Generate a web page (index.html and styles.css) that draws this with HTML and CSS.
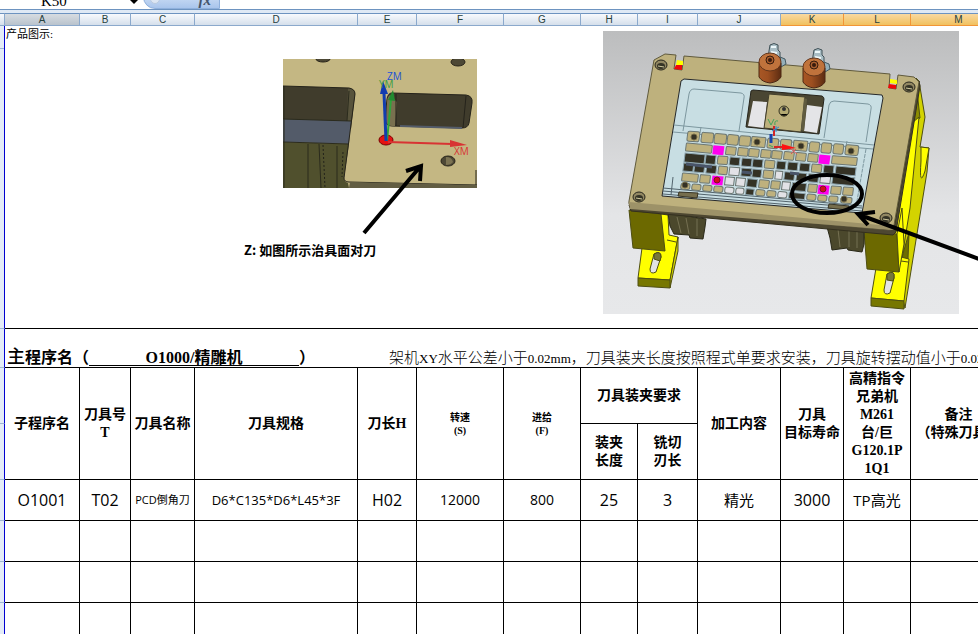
FILE: index.html
```html
<!DOCTYPE html>
<html lang="zh-CN">
<head>
<meta charset="utf-8">
<title>主程序名 O1000</title>
<link rel="stylesheet" href="styles.css">
</head>
<body>
<header class="formula-bar">
  <input class="name-box" aria-label="名称框" value="K50">
  <button class="drop" aria-label="展开名称框"><svg width="8" height="4" viewBox="0 0 8 4"><path d="M0 0h8L4 4z"/></svg></button>
  <div class="fx-area"><span class="knob"></span><button class="fx">fx</button></div>
  <input class="formula" aria-label="编辑栏">
</header>
<main class="sheet">
<table>
  <colgroup>
    <col class="c-gutter"><col class="c-a"><col class="c-b"><col class="c-c"><col class="c-d"><col class="c-e"><col class="c-f"><col class="c-g"><col class="c-h"><col class="c-i"><col class="c-j"><col class="c-k"><col class="c-l"><col class="c-m">
  </colgroup>
  <thead>
    <tr class="letters"><th></th><th class="active">A</th><th>B</th><th>C</th><th>D</th><th>E</th><th>F</th><th>G</th><th>H</th><th>I</th><th>J</th><th class="picked">K</th><th class="picked">L</th><th class="picked">M</th></tr>
  </thead>
  <tbody>
    <tr class="pictures">
      <th class="gutter split"></th>
      <td colspan="13">
        <div class="canvas">
          <span class="label">产品图示:</span>
          <figure class="detail">
            <svg width="250" height="180" viewBox="230 57 250 180" role="img" aria-label="对刀面">
              <defs><clipPath id="shot"><path d="M283 59h194v129H283z"/></clipPath></defs>
              <g clip-path="url(#shot)">
                <path fill="#c4b783" d="M283 59h194v129H283z"/>
                <path fill="#403c2c" d="M283 86l66 2q6 1 6 6l-4 35-68-8z"/>
                <path fill="#57533c" d="M348 88q7 1 7 6l-4 28-4-1z"/>
                <path fill="#535b69" d="M283 119l68 2-2 23-66-2z"/>
                <path fill="#50502d" d="M283 142l66 2-5 34q0 4 4 5l1 5h-66z"/>
                <path fill="none" stroke="#2b2b1d" d="M283 119l68 2M283 142l66 2M308 144v44M319 144l2 44M337 146v42M284 86v102M349 91l-2 30"/>
                <path fill="none" stroke="#22221a" stroke-dasharray="2 2" d="M323 145l2 43M343 152l-1 25"/>
                <path fill="none" stroke="#26241b" d="M283 86l66 2q6 1 6 6l-11 84q0 4 5 4l128 3"/>
                <path fill="#625d43" d="M350 182l127 3v3H349z"/>
                <path fill="#403c2c" stroke="#24221a" d="M392 93l74 2q7 1 6 8l-3 20q-1 5-7 5l-70-2q-7 0-7-7l2-20q1-6 5-6z"/>
                <path fill="#79704f" d="M390 95q-3 2-3 8l-1 16q0 7 6 7h3l2-24z"/>
                <path stroke="#25231b" d="M396 94v32M466 96l-3 32M476 170v15"/>
                <path stroke="#535b69" stroke-width="2" d="M400 126l62 2"/>
                <g fill="#4d4835" stroke="#282419"><ellipse cx="323" cy="59" rx="7" ry="3"/><ellipse cx="458" cy="62" rx="7" ry="4"/><ellipse cx="448" cy="161" rx="7" ry="5"/></g>
                <path fill="#7c7352" d="M446 157q6 0 7 5-2 3-7 3z"/>
              </g>
              <ellipse cx="386" cy="140" rx="7" ry="5" fill="#e51212" stroke="#700"/>
              <path stroke="#d83333" stroke-width="2" d="M388 142l64 2"/><path fill="#d83333" d="M450 140l17 5-17 2z"/>
              <path stroke="#30a43c" stroke-width="2" d="M387 141l4-42"/><path fill="#218c31" d="M393 90l2 11-7-1z"/>
              <path stroke="#123dae" stroke-width="3" d="M386 141l-2-48"/><path fill="#123bb0" d="M383 81l5 13h-8z"/>
              <text x="379" y="88" class="axis green">YM</text><text x="387" y="80" class="axis blue">ZM</text><text x="454" y="155" class="axis red">XM</text>
              <path fill="none" stroke="#000" stroke-width="4" d="M364 233l55-65M406 171l15-5-1 15"/>
            </svg>
            <figcaption>Z: 如图所示治具面对刀</figcaption>
          </figure>
          <figure class="fixture">
            <svg width="356" height="283" viewBox="603 31 356 283" role="img" aria-label="治具装配图">
              <defs>
                <linearGradient id="sky" x2="0" y2="1"><stop stop-color="#bcbdbe"/><stop offset=".65" stop-color="#e4e5e7"/><stop offset="1" stop-color="#e7e8ea"/></linearGradient>
                <linearGradient id="copper"><stop stop-color="#a85725"/><stop offset=".4" stop-color="#9d4f20"/><stop offset="1" stop-color="#5c2c12"/></linearGradient>
                <g id="stud">
                  <path fill="#a9bdc4" stroke="#3f5056" d="M0-17q4-3 8 0v5l2 2v6l-12 1 1-8z"/><path stroke="#edf8fa" stroke-width="2" d="M1-15l5 0M1-10l6 1"/>
                  <path fill="#95afb9" stroke="#445961" d="M10-5l5 2 1 5-5 3z"/>
                  <path fill="url(#copper)" stroke="#4c2815" d="M-11 1v14q3 5 11 6 8-1 11-6V1z"/>
                  <ellipse rx="11" ry="9" fill="#c0733c" stroke="#64361b"/><circle cy="-2" r="4" fill="#a95e2e" stroke="#351b0d"/><circle cy="-2" r="2" fill="#381c0d"/>
                </g>
                <g id="hole"><ellipse rx="6" ry="5" fill="#918762" stroke="#26251b"/><ellipse cy="1" rx="4" ry="3" fill="#343325"/><path stroke="#d2cb9e" d="M-3 1l6 1"/></g>
              </defs>
              <path fill="url(#sky)" d="M603 31h356v283H603z"/>
              <!-- legs -->
              <g stroke="#4e4e12" stroke-linejoin="round">
                <path fill="#d3d300" d="M916 78l3 3 6 36-5 30 9 1-2 24-22 136-7-30-8-50 20-110z"/>
                <path fill="#8c8c00" d="M916 82l4 36-8 5z"/>
                <path fill="#ff0" d="M919 117l-7 6-18 107 6 40 10-62z"/>
                <path fill="#ff0" d="M921 147l8 1-4 23q-6 18-4-10z"/>
                <path fill="#6e6e00" d="M904 250l5-17-1 26-6-1z"/>
                <path fill="#ff0" d="M876 268l25-11 8 2-5 42-33-3z"/>
                <path fill="#777700" d="M871 298l33 3v8l-33-3z"/>
                <path fill="#6c6900" d="M864 231l33 3 2 38-32-3z"/>
                <path fill="#ff0" d="M897 234l5-26 2 36-5 28z"/>
                <path fill="#e2e3e5" d="M887 274q8-5 7 4l-4 15q-6 3-6-3z"/><path fill="#77773b" d="M887 274q8-5 7 4l-1 3-6-1z"/>
                <path fill="#ff0" d="M661 214l7 1 1 20 9 2-8 43-32-2 4-30z"/>
                <path fill="#d7d700" d="M670 280l8-43v14l-8 37z"/>
                <path fill="#777700" d="M638 278l32 2v8l-32-2z"/>
                <path fill="#6c6900" d="M629 210l32 4 4 37-32-3z"/>
                <path fill="#e2e3e5" d="M654 254q7-4 7 3l-5 15q-6 3-6-3z"/><path fill="#77773b" d="M654 254q7-4 7 3l-1 4-6-2z"/>
                <path fill="none" d="M667 240l9 2M901 261l7 1"/>
              </g>
              <path fill="#4b482c" stroke="#292818" d="M668 213l38 6-1 8-2 12-13-1-1-3-15-1-4-8zM827 227l37 5v12l-2 8-14-2-1-2-15 2-2-12z"/>
              <path stroke="#757052" d="M677 217l4 16M686 218l3 16M697 219v17M838 229l2 18M849 230v17M857 232v16"/>
              <!-- plate -->
              <path fill="#4d4731" stroke="#34301f" d="M629 205l265 24 25-148 1 5-24 146-3 3-262-24z"/>
              <path fill="#beb17d" stroke="#605a3d" stroke-linejoin="round" d="M654 60l11-6 11 1-2 14 8 1 2-14 206 18-1 14 7 1 2-14 16 2 5 5-25 143q-1 5-5 5l-256-23q-5-1-4-6z"/>
              <path fill="#9d9268" d="M629 202l262 24 3 4-264-21z"/>
              <path fill="#ff0" d="M677 60l6 1v4h-7zM890 79l7 1v4l-7-1z"/><path fill="#f00808" d="M676 65h6v5l-8-1zM889 84l7 1v4l-8-1z"/>
              <!-- panel -->
              <path fill="#c8dee3" stroke="#25282a" stroke-linejoin="round" d="M684 79l198 16 1 3-21 115-200-17 19-115z"/>
              <g fill="none" stroke="#7d979f">
                <path d="M683 131l6-37q1-5 5-5l47 4q4 1 3 5l-5 33M824 138l5-33q1-4 5-4l34 3q4 1 3 5l-5 33M674 125l200 20M673 132l200 17M701 127l-1 6M847 141l-1 5"/>
                <path stroke-dasharray="4 1" d="M866 149l-9 52"/>
                <path d="M663 188l199 18M663 191l199 17M663 194l199 17M673 177l-2 18" stroke="#52636c"/>
              </g>
              <path fill="#766e4d" stroke="#383424" d="M679 192l19 1-1 5-19-2zM829 204l20 2-1 4-20-2z"/>
              <path fill="#4a4633" stroke="#26241c" d="M753 90l69 6q2 1 2 3l-5 35-73-7 5-36z"/>
              <path fill="#e4e4e7" d="M753 101l14 1-3 26-16-2zM807 105l15 2-5 26-13-2z"/>
              <path fill="#beb17d" stroke="#433f2c" d="M769 94l36 3-4 35-37-4z"/>
              <path fill="#605b40" d="M804 98l3 1-3 32-3-1z"/>
              <circle cx="784" cy="111" r="5" fill="#b4aa72" stroke="#353322"/><circle cx="784" cy="109" r="2" fill="#333"/><path stroke="#444129" d="M780 114q4 4 8 0"/>
              <!-- keys: a row per group, in the plane of the panel -->
              <g transform="matrix(1 .086 -.13 1 688 131)" class="keys">
                <g><rect width="12" height="10" rx="2"/><rect x="14" width="12" height="10" rx="2"/><rect x="27" width="12" height="10" rx="2"/><rect x="40" width="11" height="10" rx="2"/><rect x="52" width="11" height="10" rx="2"/><rect x="64" width="14" height="10" rx="1"/><rect x="80" width="11" height="10" rx="2"/><rect x="93" width="11" height="10" rx="2"/><rect x="106" width="14" height="10" rx="1"/><rect x="122" width="10" height="10" rx="2"/><rect x="134" width="10" height="10" rx="2"/><rect x="146" width="10" height="10" rx="2"/><rect x="158" width="13" height="10" rx="2"/></g>
                <g transform="translate(0 12)"><rect width="26" height="8" rx="1"/><rect class="pink" x="27" width="11" height="9"/><rect x="40" width="10" height="8" rx="1"/><rect x="52" width="10" height="8" rx="1"/><rect x="63" width="10" height="8" rx="1"/><rect x="75" width="10" height="8" rx="1"/><rect x="86" width="10" height="8" rx="1"/><rect x="98" width="10" height="8" rx="1"/><rect x="110" width="10" height="8" rx="1"/><rect x="122" width="10" height="8" rx="1"/><rect class="pink" x="133" width="11" height="9"/><rect x="146" width="25" height="8" rx="1"/></g>
                <g transform="translate(0 22)"><rect class="dark" width="20" height="9"/><rect class="dark" x="21" width="10" height="9"/><rect x="33" width="10" height="8" rx="1"/><rect class="dark" x="45" width="10" height="8"/><rect class="dark" x="57" width="10" height="8"/><rect class="dark" x="68" width="10" height="8"/><rect x="80" width="10" height="8" rx="1"/><rect class="dark" x="92" width="9" height="8"/><rect class="dark" x="103" width="10" height="8"/><rect class="dark" x="115" width="10" height="8"/><rect x="127" width="10" height="8" rx="1"/><rect class="dark" x="139" width="10" height="8"/><rect class="dark" x="151" width="20" height="8"/></g>
                <g transform="translate(0 32)"><rect class="dark" width="10" height="8"/><rect class="dark" x="11" width="10" height="8"/><rect class="dark" x="23" width="10" height="8"/><rect x="35" width="9" height="8" rx="1"/><rect class="open" x="46" width="10" height="8"/><rect class="dark" x="58" width="10" height="8"/><rect class="dark" x="69" width="9" height="8"/><rect x="80" width="10" height="8" rx="1"/><rect class="open" x="92" width="7" height="8"/><rect class="dark" x="101" width="10" height="8"/><rect class="dark" x="113" width="10" height="8"/><rect class="dark" x="125" width="10" height="8"/><rect class="open" x="137" width="10" height="8"/><rect class="dark" x="149" width="22" height="8"/></g>
                <g transform="translate(0 42)"><rect width="16" height="8" rx="1"/><rect x="18" width="10" height="8" rx="1"/><rect class="pink" x="30" width="11" height="9"/><rect class="open" x="43" width="9" height="8"/><rect class="open" x="54" width="9" height="8"/><rect class="dark" x="65" width="10" height="8"/><rect x="77" width="10" height="8" rx="1"/><rect x="89" width="9" height="8" rx="1"/><rect class="open" x="100" width="8" height="8"/><rect class="dark" x="110" width="14" height="8"/><rect x="126" width="9" height="8" rx="1"/><rect class="pink" x="136" width="11" height="9"/><rect x="149" width="10" height="8" rx="1"/><rect x="161" width="10" height="8" rx="1"/></g>
                <g transform="translate(0 52)"><rect width="9" height="6" rx="2"/><rect x="11" width="9" height="6" rx="2"/><rect x="22" width="9" height="6" rx="2"/><rect x="33" width="9" height="6" rx="2"/><rect class="open" x="44" width="9" height="6" rx="2"/><rect class="open" x="55" width="8" height="6" rx="2"/><rect class="dark" x="65" width="8" height="6"/><rect x="75" width="9" height="6" rx="2"/><rect x="86" width="9" height="6" rx="2"/><rect class="open" x="97" width="9" height="6" rx="2"/><rect class="dark" x="108" width="16" height="6"/><rect x="126" width="9" height="6" rx="2"/><rect x="137" width="9" height="6" rx="2"/><rect x="148" width="9" height="6" rx="2"/><rect x="160" width="11" height="6" rx="2"/></g>
              </g>
              <path stroke="#495468" stroke-width="3" d="M686 164l26 3M742 172l10 1M790 173l9 1"/>
              <g fill="#353225" stroke="#756b47"><circle cx="694" cy="137" r="3"/><circle cx="757" cy="142" r="3"/><circle cx="801" cy="146" r="3"/><circle cx="851" cy="151" r="3"/><circle cx="685" cy="185" r="3"/><circle cx="844" cy="199" r="3"/></g>
              <circle cx="717" cy="180" r="3" fill="#d50b1d" stroke="#7b1326"/><circle cx="823" cy="189" r="3" fill="#d50b1d" stroke="#7b1326"/>
              <use href="#hole" x="661" y="65"/><use href="#hole" x="909" y="87"/><use href="#hole" x="639" y="197"/><use href="#hole" x="886" y="218"/>
              <use href="#stud" x="770" y="62"/><use href="#stud" x="814" y="67"/>
              <path fill="none" stroke="#43a35a" d="M768 119l3 6 3-6M778 121q-4-1-3 4M769 145l4 2"/><path stroke="#1743ac" stroke-width="3" d="M771 134v9"/><path stroke="#d42525" stroke-width="2" d="M774 126v10M774 147l10 0"/><path fill="#f11" d="M782 144l14 4-14 2z"/><path stroke="#3288cd" d="M772 131l7-4M776 126v6"/><path stroke="#d55" d="M791 149l6 5M796 149l-5 5"/>
              <ellipse cx="827" cy="194" rx="35" ry="19" fill="none" stroke="#000" stroke-width="4"/>
              <path fill="none" stroke="#000" stroke-width="4" d="M990 263L860 215M875 212l-17 2 10 11"/>
            </svg>
          </figure>
        </div>
      </td>
    </tr>
    <tr class="title">
      <th class="gutter"></th>
      <td colspan="13"><div class="title-line"><h1><span class="lead">主</span>程序名（<span class="program">O1000/精雕机</span>）</h1><p>架机<span>XY</span>水平公差小于<span>0.02mm</span>，刀具装夹长度按照程式单要求安装，刀具旋转摆动值小于<span>0.02mm</span></p></div></td>
    </tr>
    <tr class="heads">
      <th class="gutter"></th>
      <th rowspan="2">子程序名</th><th rowspan="2">刀具号<br>T</th><th rowspan="2">刀具名称</th><th rowspan="2">刀具规格</th><th rowspan="2">刀长H</th>
      <th rowspan="2" class="tiny">转速<br>(S)</th><th rowspan="2" class="tiny">进给<br>(F)</th><th colspan="2">刀具装夹要求</th>
      <th rowspan="2">加工内容</th><th rowspan="2">刀具<br>目标寿命</th><th rowspan="2">高精指令<br>兄弟机<br>M261<br>台/巨<br>G120.1P<br>1Q1</th><th rowspan="2">备注<br>（特殊刀具）</th>
    </tr>
    <tr class="heads"><th class="gutter"></th><th>装夹<br>长度</th><th>铣切<br>刃长</th></tr>
    <tr class="data"><th class="gutter"></th><td>O1001</td><td>T02</td><td class="small">PCD倒角刀</td><td class="spec">D6*C135*D6*L45*3F</td><td>H02</td><td class="medium">12000</td><td class="medium">800</td><td>25</td><td>3</td><td class="han">精光</td><td>3000</td><td class="han">TP高光</td><td></td></tr>
    <tr class="data"><th class="gutter"></th><td></td><td></td><td></td><td></td><td></td><td></td><td></td><td></td><td></td><td></td><td></td><td></td><td></td></tr>
    <tr class="data"><th class="gutter"></th><td></td><td></td><td></td><td></td><td></td><td></td><td></td><td></td><td></td><td></td><td></td><td></td><td></td></tr>
    <tr class="data"><th class="gutter"></th><td></td><td></td><td></td><td></td><td></td><td></td><td></td><td></td><td></td><td></td><td></td><td></td><td></td></tr>
  </tbody>
</table>
</main>
</body>
</html>
```
FILE: styles.css
```css
* { box-sizing: border-box; }
body { margin: 0; height: 100vh; overflow: hidden; background: #fff; color: #000; }
input, button { border: 0; padding: 0; margin: 0; background: none; outline: none; }

.formula-bar { display: flex; align-items: flex-end; height: 9px; overflow: hidden; background: #fff; }
.name-box { width: 130px; height: 16px; padding-left: 41px; font: 15px/16px "Liberation Serif", serif; }
.drop { width: 8px; height: 9px; display: flex; align-items: flex-start; }
.fx-area { display: flex; align-items: flex-end; justify-content: space-between; width: 77px; height: 24px; margin-left: 5px; padding: 0 8px 0 6px; border: 1px solid #8fb0dc; border-radius: 14px 0 0 14px; background: linear-gradient(#e6effb, #a9c5ec); }
.knob { width: 10px; height: 10px; margin-bottom: 4px; border-radius: 50%; background: #dce6f3; border: 1px solid #b8c9df; }
.fx { height: 16px; font: italic bold 15px/16px "Liberation Serif", serif; color: #44546a; }
.formula { flex: 1; height: 20px; }

.sheet { border-top: 1px solid #6d93c0; padding-top: 3px; background: #dfe9f5; }
table { width: calc(100% + 29px); table-layout: fixed; border-collapse: separate; border-spacing: 0; background: #fff; }
th, td { padding: 0; border: 0 solid #000; border-width: 0 1px 1px 0; }
.c-gutter { width: 5px; } .c-a { width: 75px; } .c-b { width: 51px; } .c-c { width: 64px; } .c-d { width: 163px; }
.c-e { width: 59px; } .c-f { width: 87px; } .c-g { width: 77px; } .c-h { width: 57px; } .c-i { width: 60px; }
.c-j { width: 83px; } .c-k { width: 63px; } .c-l { width: 67px; } .c-m { width: auto; }

.letters th { height: 13px; border-color: #8ba9cc; border-top: 1px solid #6d93c0; background: linear-gradient(#f8fafd, #d5dfeb); font: 10px/11px "Liberation Sans", sans-serif; color: #27413e; }
.letters .active { background: linear-gradient(#d7dce1, #b9c3cd); }
.letters .picked { border-color: #f29536; border-top-color: #6d93c0; background: linear-gradient(#f9d9a1, #f1c15f); }
.gutter { background: #e4ecf7; border-right-color: #0000d0; border-bottom-color: #9eb6d3; }
.split { background: linear-gradient(#9eb6d3, #9eb6d3) 0 22px / 100% 1px no-repeat #e4ecf7; }

.pictures td { height: 303px; vertical-align: top; }
.canvas { display: grid; grid-template-columns: 225px 250px 1fr; }
.label { padding: 1px 0 0 1px; font: 11px/14px "Liberation Serif", "Noto Sans CJK SC", serif; }
figure { margin: 0; }
svg { display: block; }
.detail { padding-top: 31px; }
.detail figcaption { padding: 3px 0 0 14px; font: bold 13px/20px "Noto Sans CJK SC", sans-serif; }
.fixture { padding: 5px 0 0 123px; }
.fixture svg { overflow: visible; }
.axis { font: 10px "Open Sans", sans-serif; }
.green { fill: #3a9d42; } .blue { fill: #1d51d8; } .red { fill: #d83333; }
.keys rect { fill: #beb17d; stroke: #6c7773; stroke-width: 1px; }
.keys .dark { fill: #343225; stroke: #8da5af; }
.keys .open { fill: #e2e2e6; }
.keys .pink { fill: #f0e; stroke: none; }

.title td { height: 39px; vertical-align: bottom; }
.title-line { display: flex; align-items: baseline; white-space: nowrap; line-height: 18px; }
h1 { flex: none; width: 384px; margin: 0; padding-left: 2px; font: bold 16px/18px "Liberation Serif", "Noto Sans CJK SC", serif; }
.lead { font-size: 18px; font-weight: 500; }
.program { display: inline-block; width: 210px; height: 17px; line-height: 17px; border-bottom: 1px solid #000; text-align: center; }
.title p { margin: 0; font: 15px/18px "Noto Sans CJK SC", sans-serif; font-weight: 300; }
.title p span { font: 13px "Liberation Serif", serif; }

.heads th { height: 56px; font: bold 14px/18px "Liberation Serif", "Noto Sans CJK SC", serif; white-space: nowrap; }
.heads .tiny { font-size: 10px; line-height: 13px; }
.data td { height: 41px; text-align: center; white-space: nowrap; font: 16px/20px "Open Sans", "Noto Sans CJK SC", sans-serif; }
.data .medium { font-size: 14px; }
.data .spec { font-size: 13px; }
.data .han { font-size: 15px; }
.data .small { font-size: 11px; }
```
